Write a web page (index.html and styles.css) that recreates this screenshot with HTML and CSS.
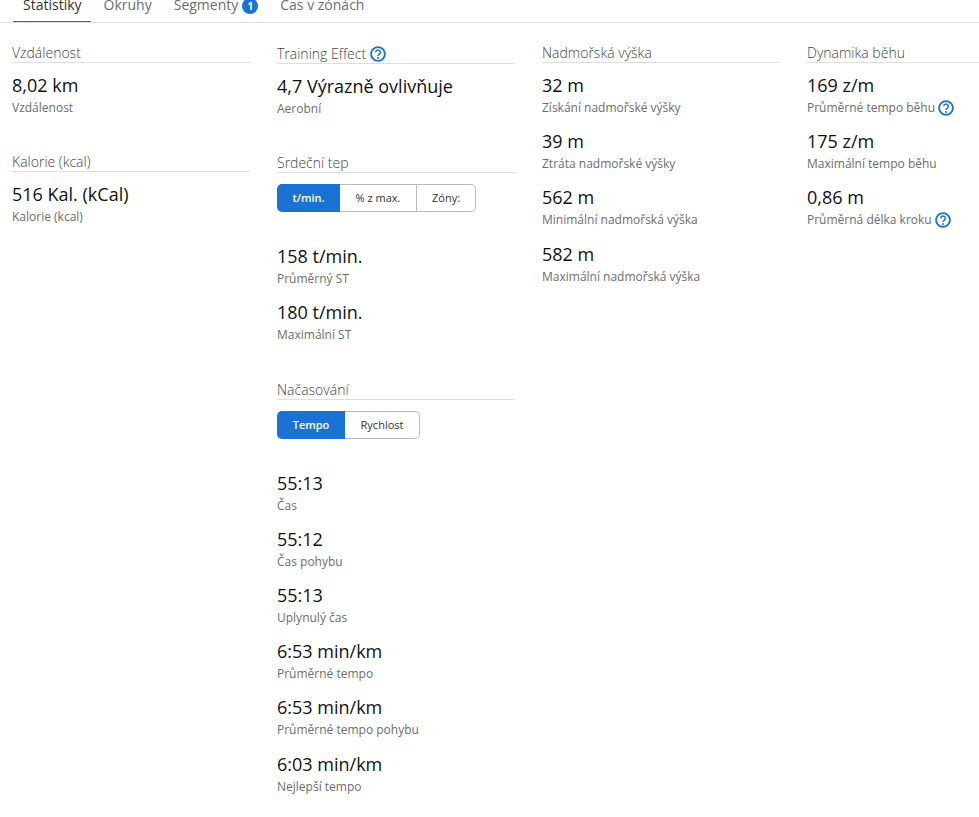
FILE: index.html
```html
<!DOCTYPE html>
<html lang="cs">
<head>
<meta charset="utf-8">
<title>Statistiky</title>
<link rel="stylesheet" href="styles.css">
</head>
<body>
<nav class="tabs">
  <a class="tab active">Statistiky</a>
  <a class="tab">Okruhy</a>
  <a class="tab">Segmenty <span class="badge">1</span></a>
  <a class="tab">Čas v zónách</a>
</nav>
<main class="grid">
  <div class="col">
    <section class="sec sec-first">
      <h3 class="title">Vzdálenost</h3>
      <div class="stat"><div class="val">8,02 km</div><div class="lab">Vzdálenost</div></div>
    </section>
    <section class="sec">
      <h3 class="title">Kalorie (kcal)</h3>
      <div class="stat"><div class="val">516 Kal. (kCal)</div><div class="lab">Kalorie (kcal)</div></div>
    </section>
  </div>
  <div class="col">
    <section class="sec sec-first">
      <h3 class="title title-icon">Training Effect<svg class="help" viewBox="0 0 16 16"><circle cx="8" cy="8" r="6.9" fill="none" stroke="#1a73d4" stroke-width="1.9"/><path d="M5.7 6.3a2.3 2.3 0 1 1 3.5 2c-.8.5-1.2.9-1.2 1.7" fill="none" stroke="#1a73d4" stroke-width="1.5"/><circle cx="8" cy="12" r="1" fill="#1a73d4"/></svg></h3>
      <div class="stat"><div class="val">4,7 Výrazně ovlivňuje</div><div class="lab">Aerobní</div></div>
    </section>
    <section class="sec">
      <h3 class="title">Srdeční tep</h3>
      <div class="btns">
        <span class="btn on w-a">t/min.</span><span class="btn w-b">% z max.</span><span class="btn w-c">Zóny:</span>
      </div>
      <div class="stat"><div class="val">158 t/min.</div><div class="lab">Průměrný ST</div></div>
      <div class="stat"><div class="val">180 t/min.</div><div class="lab">Maximální ST</div></div>
    </section>
    <section class="sec">
      <h3 class="title">Načasování</h3>
      <div class="btns">
        <span class="btn on w-d">Tempo</span><span class="btn w-e">Rychlost</span>
      </div>
      <div class="stat"><div class="val">55:13</div><div class="lab">Čas</div></div>
      <div class="stat"><div class="val">55:12</div><div class="lab">Čas pohybu</div></div>
      <div class="stat"><div class="val">55:13</div><div class="lab">Uplynulý čas</div></div>
      <div class="stat"><div class="val">6:53 min/km</div><div class="lab">Průměrné tempo</div></div>
      <div class="stat"><div class="val">6:53 min/km</div><div class="lab">Průměrné tempo pohybu</div></div>
      <div class="stat"><div class="val">6:03 min/km</div><div class="lab">Nejlepší tempo</div></div>
    </section>
  </div>
  <div class="col">
    <section class="sec sec-first">
      <h3 class="title">Nadmořská výška</h3>
      <div class="stat"><div class="val">32 m</div><div class="lab">Získání nadmořské výšky</div></div>
      <div class="stat"><div class="val">39 m</div><div class="lab">Ztráta nadmořské výšky</div></div>
      <div class="stat"><div class="val">562 m</div><div class="lab">Minimální nadmořská výška</div></div>
      <div class="stat"><div class="val">582 m</div><div class="lab">Maximální nadmořská výška</div></div>
    </section>
  </div>
  <div class="col">
    <section class="sec sec-first">
      <h3 class="title">Dynamika běhu</h3>
      <div class="stat"><div class="val">169 z/m</div><div class="lab">Průměrné tempo běhu <svg class="help" viewBox="0 0 16 16"><circle cx="8" cy="8" r="6.9" fill="none" stroke="#1a73d4" stroke-width="1.9"/><path d="M5.7 6.3a2.3 2.3 0 1 1 3.5 2c-.8.5-1.2.9-1.2 1.7" fill="none" stroke="#1a73d4" stroke-width="1.5"/><circle cx="8" cy="12" r="1" fill="#1a73d4"/></svg></div></div>
      <div class="stat"><div class="val">175 z/m</div><div class="lab">Maximální tempo běhu</div></div>
      <div class="stat"><div class="val">0,86 m</div><div class="lab">Průměrná délka kroku <svg class="help" viewBox="0 0 16 16"><circle cx="8" cy="8" r="6.9" fill="none" stroke="#1a73d4" stroke-width="1.9"/><path d="M5.7 6.3a2.3 2.3 0 1 1 3.5 2c-.8.5-1.2.9-1.2 1.7" fill="none" stroke="#1a73d4" stroke-width="1.5"/><circle cx="8" cy="12" r="1" fill="#1a73d4"/></svg></div></div>
    </section>
  </div>
</main>
</body>
</html>
```
FILE: styles.css
```css
html, body { margin: 0; padding: 0; background: #fff; height: 817px; overflow: hidden; }
body { font-family: "Open Sans", sans-serif; color: #111; }
.tabs { display: flex; height: 23px; align-items: flex-end; overflow: hidden; padding-left: 13px; border-bottom: 1px solid #ddd; box-sizing: border-box; }
.tab { font-size: 14px; line-height: 20px; color: #6d6d6d; padding: 0 10px 6px; margin-right: 2px; white-space: nowrap; display: flex; align-items: flex-end; gap: 4px; margin-bottom: -1px; border-bottom: 2px solid transparent; height: 23px; box-sizing: border-box; flex: none; }
.tab.active { color: #333; border-bottom-color: #1a73d4; padding-right: 9px; margin-right: 3px; }
.badge { width: 16px; height: 16px; margin-bottom: 1px; border-radius: 50%; background: #1a73d4; color: #fff; font-size: 10px; font-weight: 700; line-height: 16px; text-align: center; }
.grid { display: grid; grid-template-columns: 238px 238px 238px 1fr; column-gap: 27px; padding-left: 12px; }
.col { min-width: 0; }
.sec-first { padding-top: 21px; }
.title { margin: 0; font-size: 14px; font-weight: 300; line-height: 18px; color: #444; border-bottom: 1px solid #ddd; display: flex; align-items: center; gap: 4px; }
.title-icon { height: 20px; box-sizing: border-box; }
.help { width: 16px; height: 16px; flex: none; vertical-align: -4px; }
.stat { height: 56.2px; padding-top: 10px; box-sizing: border-box; }
.val { font-size: 18px; line-height: 25px; color: #111; }
.lab { font-size: 12px; line-height: 17px; margin-top: 1px; color: #6d6d6d; white-space: nowrap; }
.btns { display: flex; margin: 11px 0 22px; height: 28px; }
.btn { box-sizing: border-box; height: 28px; border: 1px solid #bbb; border-left: 0; font-size: 11px; line-height: 26px; text-align: center; color: #333; background: #fff; }
.btn:last-child { border-radius: 0 5px 5px 0; }
.btn.on { background: #1a73d4; border: 0; color: #fff; font-weight: 600; line-height: 28px; border-radius: 5px 0 0 5px; }
.w-a { width: 63px; } .w-b { width: 77px; } .w-c { width: 59px; }
.w-d { width: 68px; } .w-e { width: 75px; }
.sec + .sec { margin-top: 34px; }
```
